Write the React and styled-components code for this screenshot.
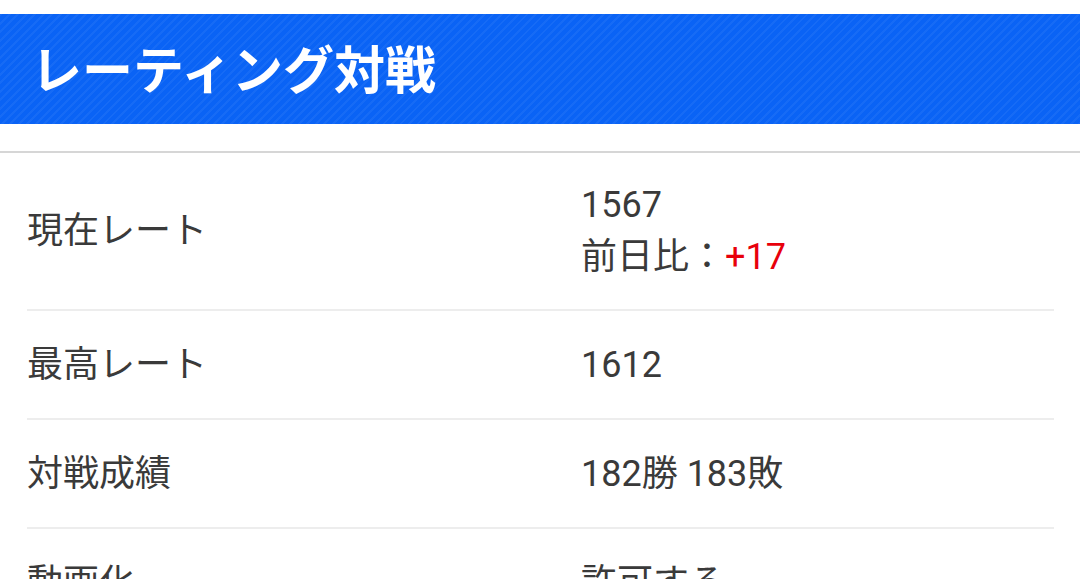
import React from 'react'
import styled, { createGlobalStyle } from 'styled-components'

const FONT = `Roboto, "Noto Sans CJK JP", sans-serif`

const rows = [
  { label: '現在レート', value: '1567', diff: '+17' },
  { label: '最高レート', value: '1612' },
  { label: '対戦成績', value: '182勝 183敗' },
  { label: '動画化', value: '許可する' },
]

const App = () => {
  return (
    <>
      <GlobalStyle />
      <Page>
        <Header>
          <Title>レーティング対戦</Title>
        </Header>
        <Table>
          {rows.map(row => (
            <Row key={row.label}>
              <Label>{row.label}</Label>
              <Value>
                <Line>{row.value}</Line>
                {row.diff && <Line>前日比：<Diff>{row.diff}</Diff></Line>}
              </Value>
            </Row>
          ))}
        </Table>
      </Page>
    </>
  )
}

const GlobalStyle = createGlobalStyle`
  body {
    margin: 0;
    background: white;
    font-family: ${FONT};
    overflow: hidden;
  }
`

const Page = styled.div`
  padding-top: 14px;
  height: 579px;
  box-sizing: border-box;
  overflow: hidden;
`

const Header = styled.header`
  height: 110px;
  display: flex;
  align-items: center;
  padding: 0 31px;
  box-sizing: border-box;
  background-color: #0a63f5;
  background-image: repeating-linear-gradient(
    135deg,
    rgba(255, 255, 255, 0.05) 0 2px,
    transparent 2px 6px
  );
  margin-bottom: 27px;
`

const Title = styled.h1`
  margin: 0;
  color: white;
  font-family: "Noto Sans CJK JP", sans-serif;
  font-size: 51px;
  font-weight: 700;
  padding-bottom: 4px;
`

const Table = styled.div`
  border-top: 2px solid #d6d6d6;
  padding: 0 26px 0 27px;
`

const Row = styled.div`
  display: flex;
  align-items: center;
  min-height: 109px;
  box-sizing: border-box;
  padding: 26px 0;
  border-bottom: 2px solid #ededed;
  color: #3a3a3a;
  font-size: 36px;
`

const Label = styled.div`
  width: 554px;
  flex-shrink: 0;
  line-height: 52px;
`

const Value = styled.div`
  display: flex;
  flex-direction: column;
`

const Line = styled.div`
  line-height: 52px;
`

const Diff = styled.span`
  color: #e8000b;
`

export default App
